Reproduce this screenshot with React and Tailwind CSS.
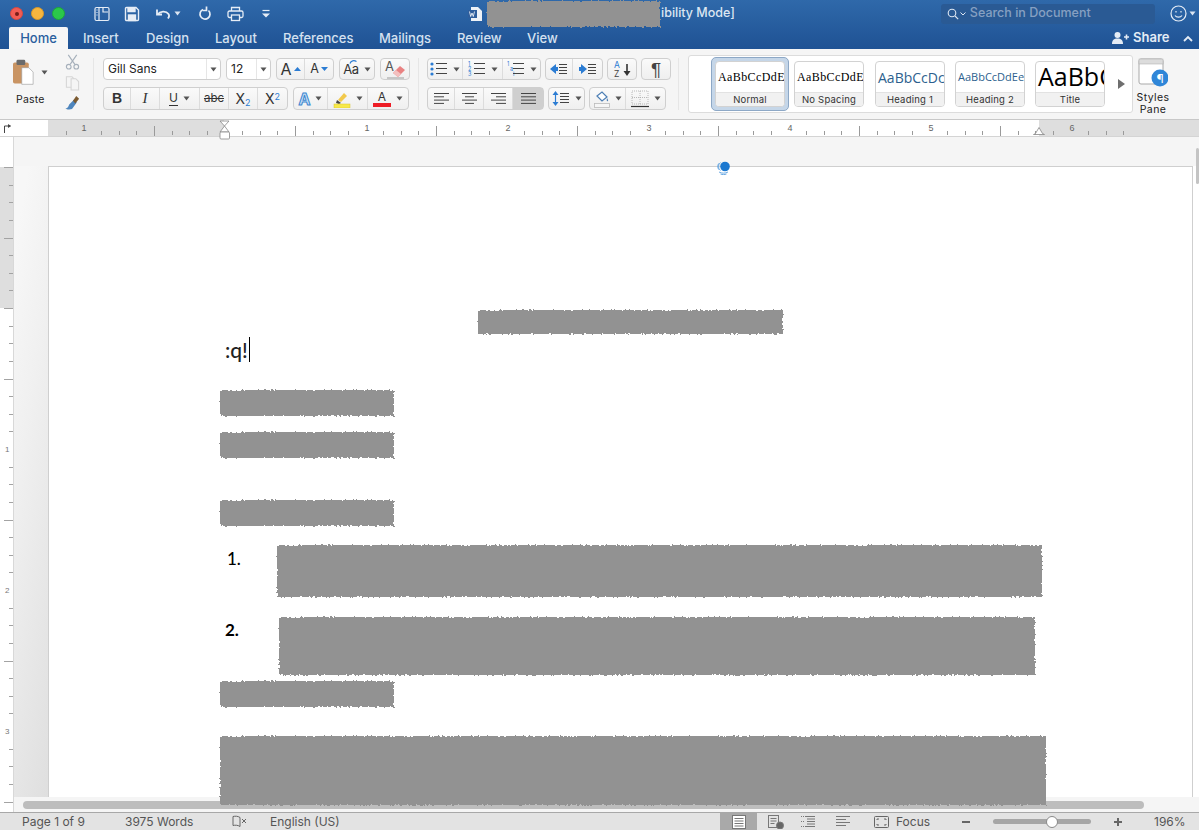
import React from "react";

const Ico = ({ w = 16, h = 16, className = "", children, stroke = "currentColor", sw = 1.2, fill = "none" }) => (
  <svg width={w} height={h} viewBox={`0 0 ${w} ${h}`} fill={fill} stroke={stroke} strokeWidth={sw} className={className}>
    {children}
  </svg>
);

const Caret = ({ color = "#555" }) => (
  <svg width="7" height="5" viewBox="0 0 7 5"><path d="M0.5 0.5h6L3.5 4.5z" fill={color} /></svg>
);

const Lines = ({ x = 0, w = 12, ys = [3, 6, 9, 12], color = "#444" }) => (
  <g stroke={color} strokeWidth="1">
    {ys.map((y) => <path key={y} d={`M${x} ${y + 0.5}h${w}`} />)}
  </g>
);

const Group = ({ children, className = "" }) => (
  <div className={`flex h-full rounded-[4px] border border-[#cfcfcf] bg-gradient-to-b from-[#fafafa] to-[#efefef] divide-x divide-[#dcdcdc] ${className}`}>{children}</div>
);

const Btn = ({ w, children, active }) => (
  <div style={{ width: w }} className={`flex h-full items-center justify-center gap-[5px] text-[#333] ${active ? "bg-[#cfcfcf]" : ""}`}>{children}</div>
);

const Tab = ({ children, w }) => (
  <div style={{ width: w }} className="text-[13px] font-medium text-[#d5e1f0] leading-[22px]">{children}</div>
);

const Select = ({ w, label }) => (
  <div style={{ width: w }} className="flex h-full items-center justify-between rounded-[4px] border border-[#cfcfcf] bg-white pl-[4px] text-[12px] text-[#222]">
    <span>{label}</span>
    <span className="flex h-full w-[14px] items-center justify-center border-l border-[#e6e6e6]"><Caret /></span>
  </div>
);

const StyleCard = ({ label, sample, cls }) => (
  <div className="flex h-[46px] w-[70px] flex-col overflow-hidden rounded-[4px] border border-[#d2d2d2] bg-white">
    <div className={`flex h-[31px] items-center justify-start overflow-hidden whitespace-nowrap pl-[2px] ${cls}`}>{sample}</div>
    <div className="h-[14px] border-t border-[#e2e2e2] bg-[#f1f1f1] text-center text-[9.5px] leading-[13px] tracking-[0.2px] text-[#333]">{label}</div>
  </div>
);

const Redact = ({ className = "" }) => (
  <div className={`bg-[#929292] [filter:url(#rough)] ${className}`} />
);

function TitleBar() {
  return (
    <div className="h-[49px] shrink-0 bg-gradient-to-b from-[#2f69aa] to-[#1f5294]">
      <div className="flex h-[27px] items-center text-[#e6edf6]">
        <div className="ml-[10px] flex w-[60px] gap-[8px]">
          <span className="h-[13px] w-[13px] rounded-full border border-[#d84a40] bg-[#f25c54] flex items-center justify-center"><span className="h-[4px] w-[4px] rounded-full bg-[#7a1d18]" /></span>
          <span className="h-[13px] w-[13px] rounded-full border border-[#d99a2a] bg-[#f6b63f]" />
          <span className="h-[13px] w-[13px] rounded-full border border-[#1ea83a] bg-[#2bc84a]" />
        </div>
        <div className="ml-[23px] flex w-[192px] items-center">
          <Ico w={16} h={16} className="ml-[1px]"><rect x="1" y="1.5" width="14" height="13" rx="1.5" /><path d="M5 2v12M9 2v4h5" /><path d="M2.5 4h1M2.5 6.5h1M2.5 9h1" /></Ico>
          <Ico w={16} h={16} className="ml-[14px]" sw={1.4}><path d="M1.5 2.5a1 1 0 0 1 1-1h9.5l2.5 2.5v9.5a1 1 0 0 1-1 1h-11a1 1 0 0 1-1-1z" /><path d="M4 1.5v4h7v-4" fill="currentColor" /><rect x="4.5" y="9" width="7" height="5.5" fill="currentColor" /></Ico>
          <Ico w={16} h={16} className="ml-[15px]" sw={1.8}><path d="M2 3.5v5h5" /><path d="M2.5 8.5C5 5 11 4.5 13.5 8c1 1.6.6 3.2-.6 4.5" /></Ico>
          <span className="ml-[3px]"><Caret color="#dbe5f2" /></span>
          <Ico w={14} h={16} className="ml-[17px]" sw={1.7}><path d="M5 3.5a5 5 0 1 0 5.5 1" /><path d="M8.5 1v4h-4" transform="translate(0 -.5)" /></Ico>
          <Ico w={17} h={16} className="ml-[15px]" sw={1.3}><path d="M4.5 5V1.5h8V5" /><rect x="1" y="5" width="15" height="6.5" rx="1.5" /><rect x="4.5" y="9" width="8" height="5.5" fill="#2a619f" /></Ico>
          <Ico w={10} h={10} className="ml-[17px]"><path d="M1.5 1.5h7" /><path d="M1 4.5h8L5 8.5z" fill="currentColor" stroke="none" /></Ico>
        </div>
        <div className="ml-[183px] flex items-center">
          <Ico w={14} h={16} stroke="none" fill="none"><path d="M3 1h7l4 4v10H3z" fill="#eef2f7" /><rect x="0" y="4" width="9" height="8" fill="#2f5e9c" /><path d="M1.500 5.500l1.200 5 1.300-3.500 1.300 3.500 1.200-5" stroke="#fff" strokeWidth=".8" fill="none" /></Ico>
          <Redact className="ml-[5px] h-[26px] w-[173px]" />
          <span className="ml-[1px] text-[12.5px] font-medium text-[#dce6f2]">ibility Mode]</span>
        </div>
        <div className="ml-[206px] flex h-[20px] w-[214px] items-center rounded-[3px] bg-[#2a5a94] pl-[6px]">
          <Ico w={12} h={12} stroke="#dfe8f3" sw={1.1}><circle cx="5" cy="5" r="3.8" /><path d="M8 8l3.2 3.2" /></Ico>
          <Ico w={6} h={4} stroke="#dfe8f3" sw={1} className="ml-[1px]"><path d="M.5.5L3 3 5.5.5" /></Ico>
          <span className="ml-[4px] text-[12.5px] font-medium text-[#86a0c2]">Search in Document</span>
        </div>
        <Ico w={17} h={17} className="ml-[15px]" sw={1.2}><circle cx="8.5" cy="8.5" r="7.5" /><path d="M5 10.5c1.5 2.2 5.5 2.2 7 0" /><path d="M6 6v1.5M11 6v1.5" /></Ico>
        <span className="ml-[2px]"><Caret color="#dbe5f2" /></span>
      </div>
      <div className="flex h-[22px] items-start">
        <div className="ml-[9px] h-[22px] w-[59px] rounded-t-[2px] bg-[#f6f6f6] text-center text-[13px] font-medium leading-[22px] text-[#2a5f9e]">Home</div>
        <div className="ml-[15px] flex">
          <Tab w={63}>Insert</Tab>
          <Tab w={69}>Design</Tab>
          <Tab w={68}>Layout</Tab>
          <Tab w={96}>References</Tab>
          <Tab w={78}>Mailings</Tab>
          <Tab w={70}>Review</Tab>
          <Tab w={40}>View</Tab>
        </div>
        <div className="ml-[545px] flex h-[22px] items-center text-[#e4ecf6]">
          <Ico w={18} h={12} stroke="none" fill="currentColor"><circle cx="5.5" cy="3" r="3" /><path d="M0 12c0-4 2-5.500 5.500-5.500S11 8 11 12z" /><path d="M12 5h5M14.500 2.500v5" stroke="currentColor" strokeWidth="1.6" /></Ico>
          <span className="ml-[3px] text-[13px] font-semibold">Share</span>
          <Ico w={10} h={7} className="ml-[14px]" sw={1.8}><path d="M1 6l4-4 4 4" /></Ico>
        </div>
      </div>
    </div>
  );
}

function FontSection() {
  return (
    <div className="flex w-[325px] flex-col gap-[7px] border-r border-[#e6e6e6] pl-[9px]">
      <div className="flex h-[22px] gap-[5px]">
        <Select w={118} label="Gill Sans" />
        <Select w={45} label="12" />
        <Group>
          <Btn w={28}><span className="flex items-center gap-[2px]"><span className="text-[16px] leading-none">A</span><svg width="7" height="4"><path d="M0 4l3.500-4 3.500 4z" fill="#2b7cd3" /></svg></span></Btn>
          <Btn w={28}><span className="flex items-center gap-[2px]"><span className="text-[12.5px] leading-none">A</span><svg width="7" height="4"><path d="M0 0l3.500 4 3.500-4z" fill="#2b7cd3" /></svg></span></Btn>
        </Group>
        <Group>
          <Btn w={34}>
            <span className="relative text-[13px] leading-none tracking-[-0.5px]">Aa<svg width="9" height="5" className="absolute left-[6px] top-[-4px]"><path d="M1 4.500C2 1.500 5 1 7.500 2.500" fill="none" stroke="#2b7cd3" strokeWidth="1.200" /></svg></span>
            <Caret />
          </Btn>
        </Group>
        <Group>
          <Btn w={28}>
            <Ico w={22} h={19} stroke="none"><text x="1" y="11" fontSize="13" fill="#555">A</text><path d="M9 13l7-7 5 4-7 7z" fill="#e98282" /><path d="M9 13l3-3 5 4-3 3z" fill="#f3c0bf" /><path d="M3 18h17" stroke="#aaa" /></Ico>
          </Btn>
        </Group>
      </div>
      <div className="flex h-[23px] gap-[5px]">
        <Group>
          <Btn w={27}><span className="font-['Liberation_Sans',sans-serif] text-[14px] font-bold">B</span></Btn>
          <Btn w={29}><span className="font-['Liberation_Serif',serif] text-[15px] italic">I</span></Btn>
          <Btn w={40}><span className="border-b border-[#333] text-[12px] leading-[14px]">U</span><Caret /></Btn>
          <Btn w={29}><span className="text-[11.5px] line-through">abc</span></Btn>
          <Btn w={29}><span className="text-[14px]">X<sub className="text-[9px] text-[#2b7cd3]">2</sub></span></Btn>
          <Btn w={29}><span className="text-[14px]">X<sup className="text-[9px] text-[#2b7cd3]">2</sup></span></Btn>
        </Group>
        <Group>
          <Btn w={34}><span className="text-[16px] font-bold leading-none text-[#cfe3f7] [-webkit-text-stroke:1px_#3b86cf]">A</span><Caret /></Btn>
          <Btn w={40}>
            <Ico w={18} h={18} stroke="none"><path d="M5 10l6-7 3 3-6 6z" fill="#f2c94c" /><path d="M4 10l4 3-2 1-3-1z" fill="#444" /><rect x="1" y="14" width="16" height="4" fill="#f7e94a" stroke="#d9c52f" strokeWidth=".5" /></Ico>
            <Caret />
          </Btn>
          <Btn w={40}>
            <span className="flex flex-col items-center"><span className="text-[12px] leading-[12px]">A</span><span className="h-[4px] w-[18px] bg-[#ee1c25]" /></span>
            <Caret />
          </Btn>
        </Group>
      </div>
    </div>
  );
}

const Bullets = ({ kind }) => (
  <Ico w={18} h={16} stroke="none">
    {kind === "b" && <g fill="#2b7cd3"><circle cx="2" cy="3" r="1.600" /><circle cx="2" cy="8" r="1.600" /><circle cx="2" cy="13" r="1.600" /></g>}
    {kind === "n" && <g fill="#2b7cd3" fontSize="5.500"><text x="0" y="5">1</text><text x="0" y="10">2</text><text x="0" y="15">3</text></g>}
    {kind === "m" && <g fill="#2b7cd3" fontSize="5.500"><text x="0" y="5">1</text><text x="3" y="10">a</text><text x="6" y="15">i</text></g>}
    <Lines x={6} w={11} ys={[2, 7, 12]} />
  </Ico>
);

const Align = ({ mode }) => {
  const rows = mode === "l" ? [[0, 15], [0, 10], [0, 15], [0, 10]] : mode === "c" ? [[0, 15], [3, 9], [0, 15], [3, 9]] : mode === "r" ? [[0, 15], [5, 10], [0, 15], [5, 10]] : [[0, 15], [0, 15], [0, 15], [0, 15]];
  return (
    <Ico w={15} h={13} stroke="#444" sw={1}>
      {rows.map(([x, w], i) => <path key={i} d={`M${x} ${1.5 + i * 3.300}h${w}`} />)}
    </Ico>
  );
};

function ParaSection() {
  return (
    <div className="flex w-[260px] flex-col gap-[7px] border-r border-[#e6e6e6] pl-[8px]">
      <div className="flex h-[22px] gap-[4px]">
        <Group>
          <Btn w={35}><Bullets kind="b" /><Caret /></Btn>
          <Btn w={40}><Bullets kind="n" /><Caret /></Btn>
          <Btn w={37}><Bullets kind="m" /><Caret /></Btn>
        </Group>
        <Group>
          <Btn w={27}><Ico w={18} h={14} stroke="none"><path d="M0 7l6-5v3h2v4H6v3z" fill="#2b7cd3" /><Lines x={9} w={8} ys={[2, 5, 8, 11]} /></Ico></Btn>
          <Btn w={29}><Ico w={18} h={14} stroke="none"><path d="M8 7L2 2v3H0v4h2v3z" fill="#2b7cd3" /><Lines x={9} w={8} ys={[2, 5, 8, 11]} /></Ico></Btn>
        </Group>
        <Group>
          <Btn w={28}>
            <Ico w={19} h={19} stroke="none"><text x="1" y="8" fontSize="8.500" fill="#2b7cd3">A</text><text x="1" y="17" fontSize="8.500" fill="#444">Z</text><path d="M14 4v9" stroke="#333" strokeWidth="1.600" /><path d="M10.500 11h7L14 16z" fill="#333" /></Ico>
          </Btn>
        </Group>
        <Group><Btn w={28}><span className="font-['Liberation_Sans',sans-serif] text-[19px] leading-none text-[#444]">¶</span></Btn></Group>
      </div>
      <div className="flex h-[23px] gap-[4px]">
        <Group>
          <Btn w={27}><Align mode="l" /></Btn>
          <Btn w={29}><Align mode="c" /></Btn>
          <Btn w={29}><Align mode="r" /></Btn>
          <Btn w={30} active><Align mode="j" /></Btn>
        </Group>
        <Group>
          <Btn w={35}>
            <Ico w={18} h={15} stroke="none"><path d="M3.500 0l3 4h-6zM3.500 15l3-4h-6z" fill="#2b7cd3" /><path d="M3.500 4v7" stroke="#2b7cd3" /><Lines x={8} w={9} ys={[2, 5, 8, 11]} /></Ico>
            <Caret />
          </Btn>
        </Group>
        <Group>
          <Btn w={36}>
            <Ico w={16} h={18} stroke="none"><path d="M3 6l5-4 5 5-5 4z" fill="#fff" stroke="#4d7fb5" /><path d="M13 8c1 1.500 1.500 2.500.8 3.200-.8.500-1.500-.6-.8-3.200z" fill="#4d7fb5" /><rect x="0.500" y="13.500" width="15" height="4" fill="#f6f6f6" stroke="#bbb" strokeWidth=".8" /></Ico>
            <Caret />
          </Btn>
          <Btn w={39}>
            <Ico w={18} h={18} stroke="none"><rect x="1" y="1" width="16" height="13" fill="none" stroke="#aaa" strokeWidth=".8" strokeDasharray="1 1" /><path d="M9 1v13M1 7.500h16" stroke="#aaa" strokeWidth=".8" strokeDasharray="1 1" /><path d="M0 16.500h18" stroke="#333" /></Ico>
            <Caret />
          </Btn>
        </Group>
      </div>
    </div>
  );
}

function Ribbon() {
  return (
    <div className="flex h-[71px] shrink-0 items-start border-b border-[#c8c8c8] bg-[#f5f5f5] pt-[9px]">
      <div className="flex h-[52px] w-[94px] border-r border-[#e6e6e6]">
        <div className="ml-[13px] flex w-[35px] flex-col">
          <div className="flex items-center">
            <Ico w={24} h={29} stroke="none">
              <rect x="0" y="3" width="18" height="24" rx="2" fill="#c99463" />
              <rect x="4" y="0" width="10" height="6" rx="1.500" fill="#6b6b6b" />
              <path d="M10 9h8l5 5v14H10z" fill="#fff" stroke="#9a9a9a" strokeWidth=".7" />
            </Ico>
            <span className="ml-[7px]"><Caret /></span>
          </div>
          <div className="ml-[3px] mt-[6px] w-[32px] text-[10.5px] leading-[13px] tracking-[0.2px] text-[#222]">Paste</div>
        </div>
        <div className="ml-[16px] flex flex-col items-center gap-[4px] -mt-[4px]">
          <Ico w={15} h={17} stroke="#a6b0bb" sw={1.2}><path d="M3 1l7 10M12 1L5 11" /><circle cx="3.500" cy="13.500" r="2.500" /><circle cx="11.500" cy="13.500" r="2.500" /></Ico>
          <Ico w={15} h={18} stroke="#d5d5d5" sw={1.1}><path d="M1 3h6l3 3v8H1z" /><path d="M6 5h5l3 3v9H6z" fill="#f5f5f5" /></Ico>
          <Ico w={17} h={16} stroke="none"><path d="M10 5l3 3-5 7c-3 1-6 .5-7-1 3 0 3-2 4-4z" fill="#4f86bd" /><path d="M9 6l3.500-5 3 3-4 5z" fill="#7b5a30" /></Ico>
        </div>
      </div>
      <FontSection />
      <ParaSection />
      <div className="ml-[9px] -mt-[3px] flex h-[58px] w-[445px] items-center rounded-[3px] border border-[#dcdcdc] bg-white pl-[22px]">
        <div className="rounded-[5px] border border-[#8da8c6] bg-[#c5d6e8] p-[3px]">
          <StyleCard label="Normal" sample="AaBbCcDdEe" cls="font-['Liberation_Serif',serif] text-[12px] tracking-[0.4px] text-black" />
        </div>
        <div className="ml-[5px]"><StyleCard label="No Spacing" sample="AaBbCcDdEe" cls="font-['Liberation_Serif',serif] text-[12px] tracking-[0.4px] text-black" /></div>
        <div className="ml-[11px]"><StyleCard label="Heading 1" sample="AaBbCcDc" cls="font-['Open_Sans',sans-serif] text-[14px] text-[#2d5f8e]" /></div>
        <div className="ml-[10px]"><StyleCard label="Heading 2" sample="AaBbCcDdEe" cls="font-['Open_Sans',sans-serif] text-[11px] text-[#2d5f8e]" /></div>
        <div className="ml-[10px]"><StyleCard label="Title" sample="AaBbC" cls="font-['Open_Sans',sans-serif] text-[25px] text-black" /></div>
        <svg width="7" height="10" className="ml-[13px]"><path d="M0 0l7 5-7 5z" fill="#6e6e6e" /></svg>
      </div>
      <div className="ml-[2px] flex w-[36px] flex-col items-center">
        <svg width="30" height="31">
          <rect x="1" y="1" width="24" height="25" rx="2" fill="#fff" stroke="#a9a9a9" />
          <rect x="1" y="1" width="24" height="5" fill="#dcdcdc" stroke="#a9a9a9" strokeWidth=".5" />
          <circle cx="22" cy="20" r="8.500" fill="#2f86d8" />
          <text x="22" y="24.500" fontSize="12" fill="#fff" textAnchor="middle">¶</text>
        </svg>
        <div className="mt-[3px] text-center text-[10.5px] leading-[12px] tracking-[0.4px] text-[#222]">Styles<br />Pane</div>
      </div>
    </div>
  );
}

function HRuler() {
  const ticks = [];
  for (let i = -2; i < 60; i++) {
    ticks.push(83.500 + (i * 141) / 8);
  }
  const nums = [[84, "1"], [367, "1"], [508, "2"], [649, "3"], [790, "4"], [931, "5"], [1072, "6"]];
  return (
    <div className="relative flex h-[17px] shrink-0 border-b border-[#d4d4d4] bg-white">
      <div className="flex w-[14px] items-center justify-center">
        <svg width="8" height="9"><path d="M1.500 9V2h6" fill="none" stroke="#444" /><path d="M5 0l3 2-3 2z" fill="#444" /></svg>
      </div>
      <div className="w-[34px]" />
      <div className="w-[176px] bg-[#dedede]" />
      <div className="w-[815px]" />
      <div className="flex-1 bg-[#dedede]" />
      <svg width="1199" height="27" className="absolute left-0 top-0 z-20">
        {ticks.filter((x) => x > 49).map((x, i) => {
          const k = Math.round((x - 83.500) / (141 / 8));
          const big = k % 4 === 0 && k % 8 !== 0;
          const num = k % 8 === 0;
          if (num) return null;
          return <path key={i} d={`M${Math.round(x) + 0.5} ${big ? 6 : 11}v${big ? 10 : 4}`} stroke="#9a9a9a" />;
        })}
        {nums.map(([x, t]) => <text key={x} x={x} y="11" fontSize="9" fill="#666" textAnchor="middle" fontFamily="Liberation Sans">{t}</text>)}
        <path d="M220 1h9l-4.500 5zM220 12l4.500-6 4.500 6z" fill="#fff" stroke="#888" strokeWidth=".8" />
        <rect x="220" y="12" width="9.500" height="7" rx="1" fill="#fff" stroke="#888" strokeWidth=".8" />
        <path d="M1033.500 14.500l2-1 3.500-6 3.500 6 2 1z" fill="#fff" stroke="#888" strokeWidth=".8" />
      </svg>
    </div>
  );
}

function VRuler() {
  const marks = [];
  for (let k = -11; k < 30; k++) {
    const y = 308 - 137 + (k * 141) / 8;
    if (y < 30) continue;
    marks.push([k, y]);
  }
  return (
    <div className="relative w-[14px] shrink-0 border-r border-[#d8d8d8] bg-white">
      <div className="mt-[30px] h-[141px] bg-[#dedede]" />
      <svg width="14" height="675" className="absolute left-0 top-0">
        {marks.map(([k, y]) => {
          const num = k % 8 === 0 && k > 0;
          if (num) return <text key={k} x="5" y={y + 3} fontSize="8" fill="#777" fontFamily="Liberation Sans">{k / 8}</text>;
          const big = k % 4 === 0;
          return <path key={k} d={`M${big ? 4 : 9} ${Math.round(y) + 0.5}h${big ? 9 : 4}`} stroke="#a3a3a3" />;
        })}
      </svg>
    </div>
  );
}

function Page() {
  return (
    <div className="relative z-10 h-[631px] w-[1145px] shrink-0 border-l border-t border-r border-[#cfcfcf] bg-white">
      <svg width="16" height="14" className="absolute left-[667px] top-[-6px]">
        <circle cx="9" cy="5.500" r="4.800" fill="#1b78d0" />
        <path d="M4.500 1.500a5 5 0 0 0 0 8M2.500 2.500a6 6 0 0 0 0 6" fill="none" stroke="#5da2e0" strokeWidth=".9" />
        <path d="M3 11c3 1.500 6 1.500 9 0M4.500 13c2 .8 4 .8 6 0" fill="none" stroke="#5da2e0" strokeWidth=".9" />
      </svg>
      <div className="pl-[171px] pt-[143px] font-['Lato',sans-serif]">
        <Redact className="ml-[258px] h-[24px] w-[305px]" />
        <div className="mt-[2px] flex h-[27px] items-center pl-[5px] text-[21px] font-medium leading-none text-[#222]">
          <span>:q!</span><span className="ml-[1px] h-[25px] w-px bg-black" />
        </div>
        <Redact className="mt-[27px] h-[26px] w-[174px]" />
        <Redact className="mt-[16px] h-[26px] w-[174px]" />
        <Redact className="mt-[42px] h-[26px] w-[174px]" />
        <div className="mt-[19px] flex h-[52px] items-start">
          <div className="w-[57px] pl-[7px] pt-[2px] text-[17px] font-medium leading-[24px] text-black">1.</div>
          <Redact className="h-[52px] w-[765px]" />
        </div>
        <div className="mt-[20px] flex h-[58px] items-start">
          <div className="w-[59px] pl-[5px] pt-[1px] text-[17px] font-bold leading-[24px] text-black">2.</div>
          <Redact className="h-[58px] w-[756px]" />
        </div>
        <Redact className="mt-[6px] h-[26px] w-[174px]" />
        <Redact className="mt-[29px] h-[69px] w-[826px]" />
      </div>
    </div>
  );
}

function Work() {
  return (
    <div className="flex h-[675px] shrink-0 overflow-hidden">
      <VRuler />
      <div className="flex flex-1 flex-col bg-[#f5f5f5]">
        <div className="h-[29px] shrink-0" />
        <div className="flex h-[631px]">
          <div className="w-[34px] bg-[linear-gradient(100deg,#f7f7f7_10%,#f0f0f0_40%,#dfdfdf_100%)]" />
          <Page />
          <div className="flex flex-1 justify-end bg-white">
            <div className="-mt-[18px] h-[36px] w-[3px] rounded-full bg-[#c4c4c4]" />
          </div>
        </div>
        <div className="flex flex-1 items-center pl-[9px]">
          <div className="h-[8px] w-[1121px] rounded-full bg-[#bdbdbd]" />
        </div>
      </div>
    </div>
  );
}

function StatusBar() {
  return (
    <div className="flex h-[18px] shrink-0 items-center border-t border-[#a8a8a8] bg-[#e3e3e3] text-[12px] leading-none text-[#555]">
      <span className="ml-[22px] w-[103px]">Page 1 of 9</span>
      <span className="w-[107px]">3975 Words</span>
      <Ico w={16} h={13} stroke="#666" sw={1}><path d="M8 2.500C6 1 3 1 1 1.500v9c2-.5 5-.5 7 1V2.500z" /><path d="M10 4l4 4M14 4l-4 4" /></Ico>
      <span className="ml-[22px] w-[450px]">English (US)</span>
      <div className="flex h-full w-[37px] items-center justify-center bg-[#a9a9a9]">
        <Ico w={14} h={14} stroke="#777" sw={1} fill="#fff"><rect x=".5" y=".5" width="13" height="13" /><path d="M2.500 3.500h9M2.500 6h9M2.500 8.500h9M2.500 11h9" /></Ico>
      </div>
      <Ico w={16} h={14} stroke="#777" sw={1} className="ml-[11px]"><rect x=".5" y=".5" width="10" height="12" /><path d="M2.500 3.500h6M2.500 6h6M2.500 8.500h4" /><circle cx="12" cy="10.500" r="3.500" fill="#666" /></Ico>
      <Ico w={14} h={13} stroke="#777" sw={1} className="ml-[17px]"><path d="M0 1.500h3M0 6.500h3M0 11.500h3" strokeDasharray="1 1" /><path d="M4 1.500h10M6 4h8M6 6.500h8M6 9h8M4 11.500h10" /></Ico>
      <Ico w={14} h={13} stroke="#777" sw={1} className="ml-[21px]"><path d="M0 1.500h14M0 4.500h10M0 7.500h14M0 10.500h10" /></Ico>
      <Ico w={15} h={12} stroke="#666" sw={1} className="ml-[24px]"><rect x=".5" y=".5" width="14" height="11" rx="1" /><path d="M3 4V3h2M10 3h2v1M12 8v1h-2M5 9H3V8" /></Ico>
      <span className="ml-[7px] w-[66px]">Focus</span>
      <span className="h-[2px] w-[8px] bg-[#666]" />
      <div className="relative ml-[23px] h-[5px] w-[98px] rounded-full bg-[#a6a6a6]">
        <span className="absolute left-[53px] top-[-3.500px] h-[12px] w-[12px] rounded-full border border-[#8a8a8a] bg-white" />
      </div>
      <span className="relative ml-[23px] h-[2px] w-[8px] bg-[#666]"><span className="absolute left-[3px] top-[-3px] h-[8px] w-[2px] bg-[#666]" /></span>
      <span className="ml-[32px]">196%</span>
    </div>
  );
}

export default function App() {
  return (
    <div className="flex h-[830px] w-[1199px] flex-col overflow-hidden bg-white font-['Inter',sans-serif]">
      <svg width="0" height="0" className="absolute">
        <filter id="rough" x="-5%" y="-15%" width="110%" height="130%">
          <feTurbulence type="fractalNoise" baseFrequency="0.45" numOctaves="2" seed="4" />
          <feDisplacementMap in="SourceGraphic" scale="3.500" />
        </filter>
      </svg>
      <TitleBar />
      <Ribbon />
      <HRuler />
      <Work />
      <StatusBar />
    </div>
  );
}
